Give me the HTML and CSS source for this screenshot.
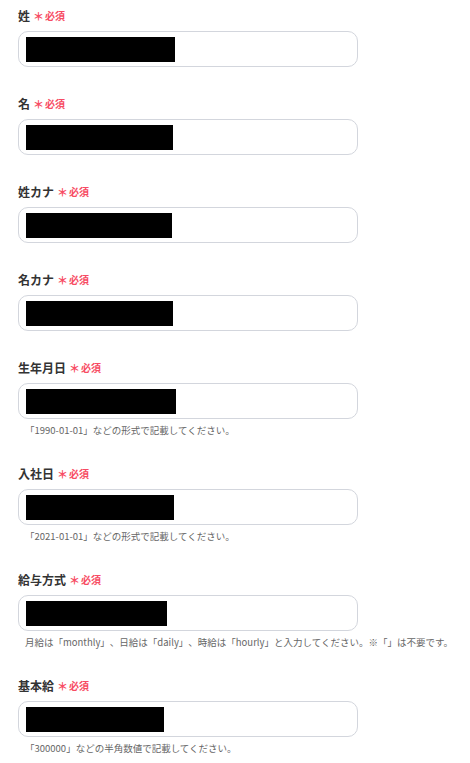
FILE: index.html
```html
<!DOCTYPE html>
<html lang="ja">
<head>
    <meta charset="UTF-8">
    <meta name="viewport" content="width=device-width, initial-scale=1.0">
    <title>従業員情報</title>
    <link rel="stylesheet" href="styles.css">
</head>
<body>

<form class="form">
    <div class="field">
        <label class="label">姓 <span class="req"><span class="star">＊</span>必須</span></label>
        <div class="input"><span class="redacted" style="width:149px"></span></div>
    </div>

    <div class="field">
        <label class="label">名 <span class="req"><span class="star">＊</span>必須</span></label>
        <div class="input"><span class="redacted" style="width:147px"></span></div>
    </div>

    <div class="field">
        <label class="label">姓カナ <span class="req"><span class="star">＊</span>必須</span></label>
        <div class="input"><span class="redacted" style="width:146px"></span></div>
    </div>

    <div class="field">
        <label class="label">名カナ <span class="req"><span class="star">＊</span>必須</span></label>
        <div class="input"><span class="redacted" style="width:147px"></span></div>
    </div>

    <div class="field">
        <label class="label">生年月日 <span class="req"><span class="star">＊</span>必須</span></label>
        <div class="input"><span class="redacted" style="width:150px"></span></div>
        <p class="hint">「1990-01-01」などの形式で記載してください。</p>
    </div>

    <div class="field">
        <label class="label">入社日 <span class="req"><span class="star">＊</span>必須</span></label>
        <div class="input"><span class="redacted" style="width:148px"></span></div>
        <p class="hint">「2021-01-01」などの形式で記載してください。</p>
    </div>

    <div class="field">
        <label class="label">給与方式 <span class="req"><span class="star">＊</span>必須</span></label>
        <div class="input"><span class="redacted" style="width:141px"></span></div>
        <p class="hint">月給は「monthly」、日給は「daily」、時給は「hourly」と入力してください。※「」は不要です。</p>
    </div>

    <div class="field">
        <label class="label">基本給 <span class="req"><span class="star">＊</span>必須</span></label>
        <div class="input"><span class="redacted" style="width:138px"></span></div>
        <p class="hint">「300000」などの半角数値で記載してください。</p>
    </div>
</form>

</body>
</html>
```

FILE: styles.css
```css
body {
    font-family: "Noto Sans CJK JP", "Noto Sans", sans-serif;
    margin: 0;
    padding: 7px 0 0 18px;
    background-color: #fff;
    color: #333;
}

.form {
    width: 340px;
}

.field {
    margin-bottom: 28px;
}

.label {
    display: flex;
    align-items: center;
    height: 16px;
    margin-bottom: 8px;
    font-size: 12px;
    font-weight: bold;
    color: #333;
}

.req {
    display: inline-flex;
    align-items: center;
    margin-left: 3px;
    font-size: 10px;
    font-weight: bold;
    color: #f74c63;
}

.star {
    font-size: 11px;
    margin-right: 1px;
    position: relative;
    top: 1px;
}

.input {
    box-sizing: border-box;
    height: 36px;
    border: 1px solid #d3d6dd;
    border-radius: 10px;
    padding: 4px 7px;
    display: flex;
    align-items: center;
}

.redacted {
    display: block;
    height: 25px;
    background-color: #000;
}

.hint {
    margin: 4px 0 0;
    padding-left: 7px;
    font-size: 9.5px;
    line-height: 14px;
    color: #666;
    white-space: nowrap;
    text-spacing-trim: space-all;
}
```
